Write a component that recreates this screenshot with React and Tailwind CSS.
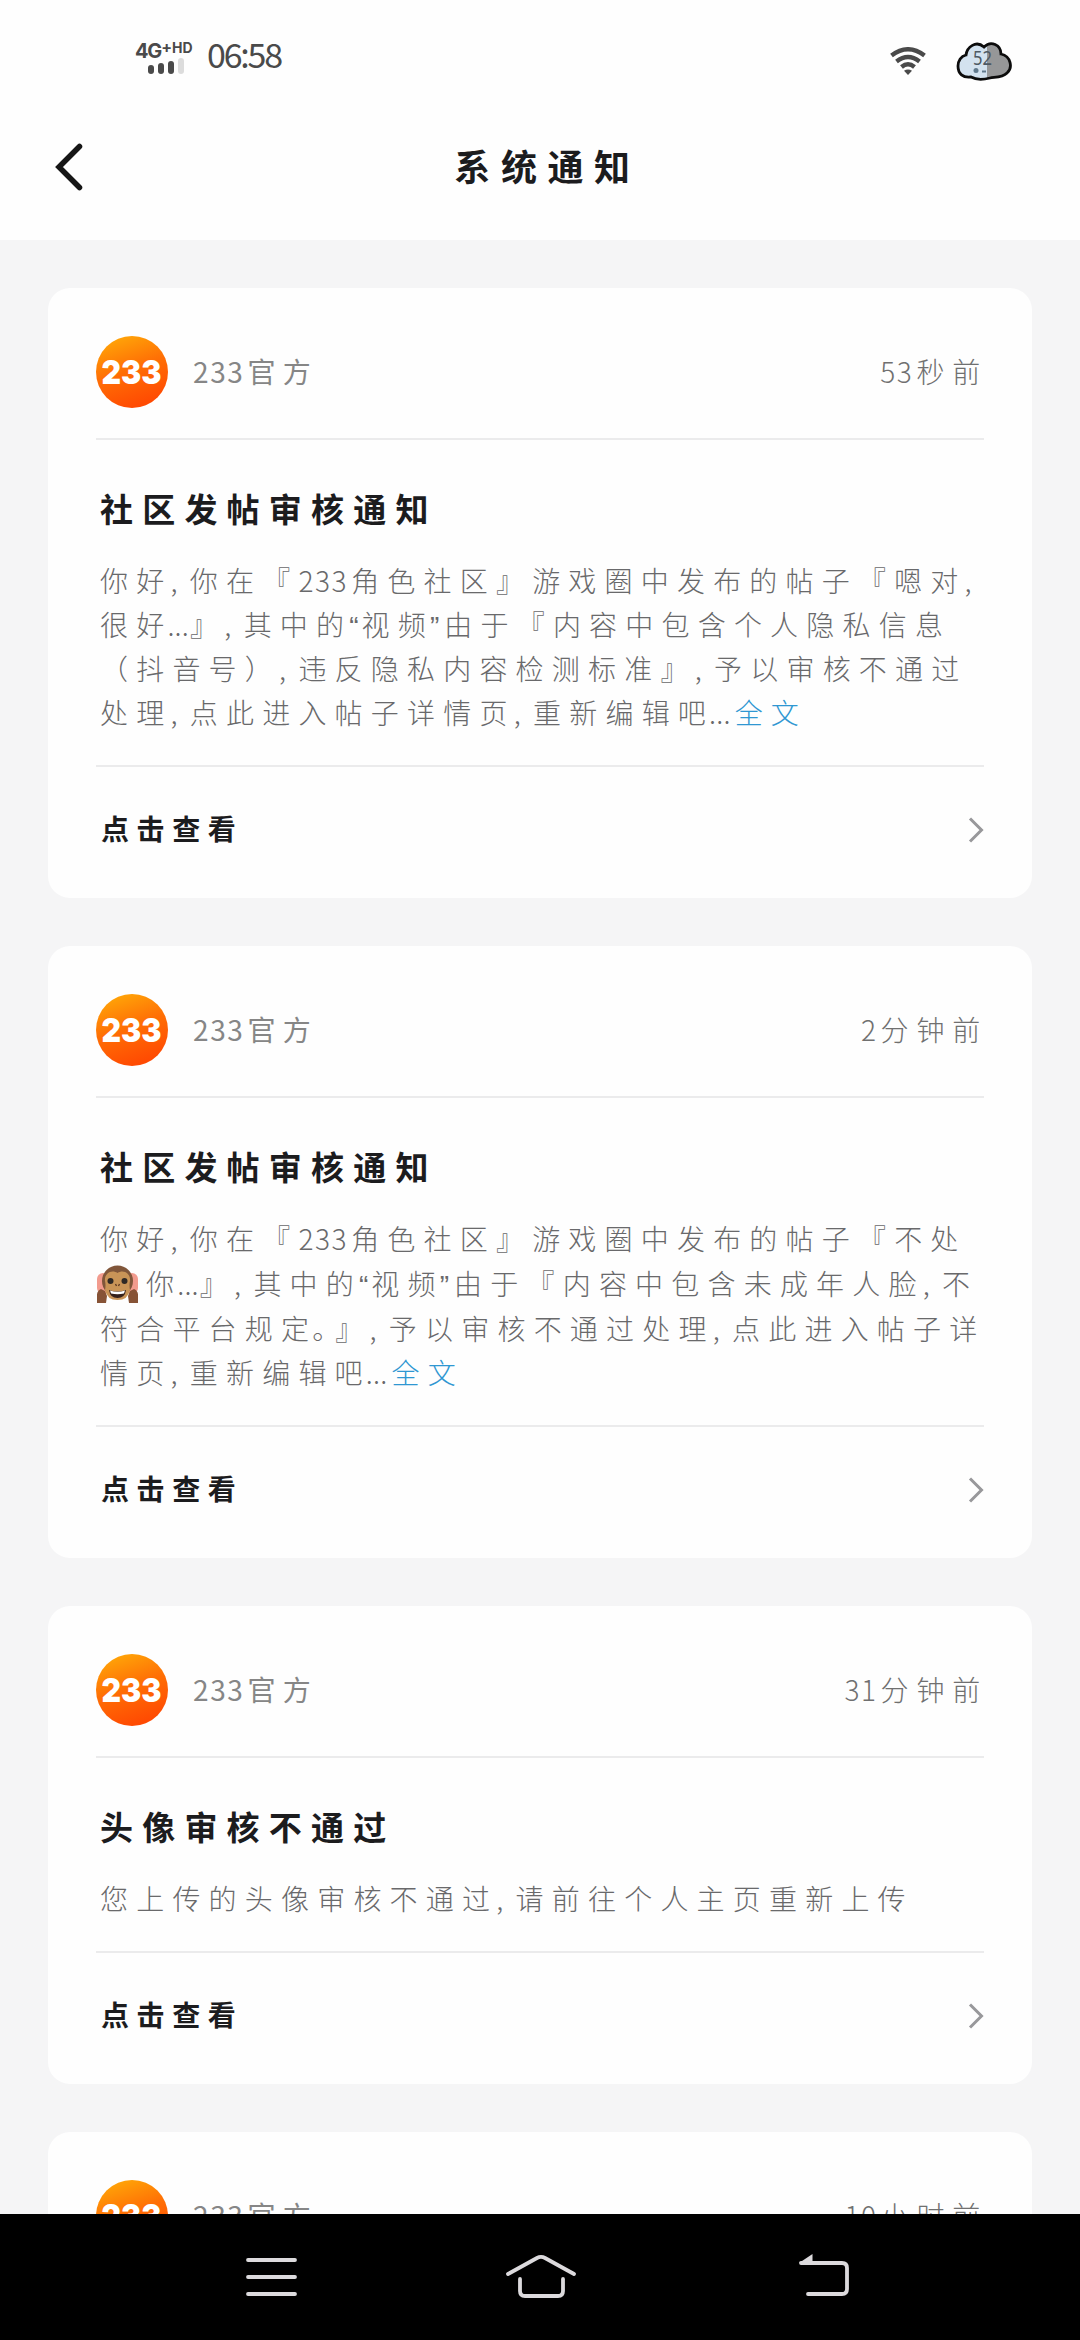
const notices = [
  {
    time: "53秒前",
    title: "社区发帖审核通知",
    lines: [
      "你好,你在『233角色社区』游戏圈中发布的帖子『嗯对,",
      "很好...』,其中的“视频”由于『内容中包含个人隐私信息",
      "（抖音号）,违反隐私内容检测标准』,予以审核不通过",
      "处理,点此进入帖子详情页,重新编辑吧...",
    ],
    more: true,
  },
  {
    time: "2分钟前",
    title: "社区发帖审核通知",
    lines: [
      "你好,你在『233角色社区』游戏圈中发布的帖子『不处",
      "@你...』,其中的“视频”由于『内容中包含未成年人脸,不",
      "符合平台规定。』,予以审核不通过处理,点此进入帖子详",
      "情页,重新编辑吧...",
    ],
    more: true,
  },
  {
    time: "31分钟前",
    title: "头像审核不通过",
    lines: ["您上传的头像审核不通过,请前往个人主页重新上传"],
  },
  {
    time: "10小时前",
    title: "头像审核不通过",
    lines: ["您上传的头像审核不通过,请前往个人主页重新上传"],
  },
]

function Monkey() {
  return (
    <svg viewBox="0 0 41 38" className="inline-block w-[41px] h-[38px] -ml-[3px] mr-[8px] -mt-[7px] align-middle">
      <rect x="0" y="8" width="12" height="21" rx="6" fill="#f29b8e" />
      <rect x="29" y="8" width="12" height="21" rx="6" fill="#f29b8e" />
      <path d="M0 38V29Q1 25 4 24L8 26L10 31L9 38Z" fill="#875336" />
      <path d="M41 38V29Q40 25 37 24L33 26L31 31L32 38Z" fill="#875336" />
      <circle cx="20.5" cy="16" r="15.5" fill="#80563a" />
      <path d="M20.5 8C15 4 7 8 8 16Q9 20 8 25Q10 35 20.5 35Q31 35 33 25Q32 20 33 16C34 8 26 4 20.5 8Z" fill="#c99457" />
      <circle cx="13.5" cy="16" r="3" fill="#2e2825" />
      <circle cx="27.5" cy="16" r="3" fill="#2e2825" />
      <path d="M18.5 19L19.5 21M22.5 19L21.5 21" stroke="#5c3822" strokeWidth="1.3" />
      <path d="M12 25Q20.5 28 29 25Q28 33 20.5 33Q13 33 12 25Z" fill="#35201a" />
      <path d="M13 25.5Q20.5 28 28 25.5L27 28.5Q20.5 30 14 28.5Z" fill="#fff" />
    </svg>
  )
}

// digits and half-width marks sit tighter than the characters around them
function Run({ text }) {
  const parts = text.split(/(\d+|\.\.\.|,|。|“|”|@)/).filter(Boolean)

  return parts.map((part, i) => {
    if (part === "@") return <Monkey key={i} />
    if (/^\d/.test(part)) return <span key={i} className="mr-[3px] tracking-[1.6px]">{part}</span>
    if (part === "...") return <span key={i} className="-ml-[5px] mr-[1px] tracking-[0.2px]">{part}</span>
    if (part === ",") return <span key={i} className="-ml-[2px] tracking-[12.4px]">{part}</span>
    if (part === "。") return <span key={i} className="-ml-[5px] tracking-[-5px]">{part}</span>
    if (part === "“") {
      return <span key={i} className="-ml-[3px] mr-[3px] font-['Liberation_Sans'] tracking-[0px]">{part}</span>
    }
    if (part === "”") {
      return <span key={i} className="-ml-[4px] mr-[5px] font-['Liberation_Sans'] tracking-[0px]">{part}</span>
    }
    return <span key={i}>{part}</span>
  })
}

function Logo() {
  return (
    <svg viewBox="0 0 72 72" className="w-[72px] h-[72px] shrink-0">
      <defs>
        <linearGradient id="logo" x1="0.15" y1="0" x2="0.5" y2="1">
          <stop offset="0" stopColor="#ffab08" />
          <stop offset="0.5" stopColor="#ff6f05" />
          <stop offset="1" stopColor="#ff4a02" />
        </linearGradient>
      </defs>
      <circle cx="36" cy="36" r="36" fill="url(#logo)" />
      <text x="5.5" y="48" textLength="60" lengthAdjust="spacingAndGlyphs" fill="#fff" className="font-['Inter'] font-black text-[33px]">
        233
      </text>
    </svg>
  )
}

function StatusBar() {
  return (
    <div className="h-[96px] pt-[38px] pl-[135px] pr-[68px] flex items-start text-[#4a4a4a]">
      <div className="w-[61px]">
        <div className="flex items-start font-['Inter'] font-bold leading-none">
          <span className="text-[20px] leading-[26px] tracking-[-1.2px]">4G</span>
          <span className="text-[16px] leading-[18px]">+</span>
          <span className="text-[14px] leading-[19px] tracking-[0px]">HD</span>
        </div>
        <div className="flex items-end gap-[4px] pl-[13px] h-[10px]">
          <span className="w-[6px] h-[9px] shrink-0 rounded-sm bg-[#4a4a4a]" />
          <span className="w-[6px] h-[11px] shrink-0 rounded-sm bg-[#4a4a4a]" />
          <span className="w-[6px] h-[13px] shrink-0 rounded-sm bg-[#4a4a4a]" />
          <span className="w-[6px] h-[16px] shrink-0 rounded-sm bg-[#dcdcdc]" />
        </div>
      </div>
      <span className="ml-[11px] mt-[-2px] font-['Noto_Sans_CJK_SC',sans-serif] text-[34px] leading-[36px] tracking-[-2.2px]">
        06:58
      </span>
      <svg viewBox="0 0 36 28" className="ml-auto mt-[9px] w-[36px] h-[28px]" fill="none" stroke="#4a4a4a" strokeWidth="4.4">
        <path d="M1.5 8.5Q18 -4 34.5 8.5" />
        <path d="M6.5 14.5Q18 5.5 29.5 14.5" />
        <path d="M11.5 20Q18 14.5 24.5 20" />
        <path d="M14 23.8Q18 21 22 23.8L18 28Z" fill="#4a4a4a" stroke="none" />
      </svg>
      <svg viewBox="0 0 56 40" className="ml-[30px] mt-[3px] w-[56px] h-[40px]">
        <defs>
          <linearGradient id="charge">
            <stop offset="0.55" stopColor="#d3e2ef" />
            <stop offset="0.55" stopColor="#969798" />
          </linearGradient>
        </defs>
        <path
          d="M10 14C11 6 20 -1 28 6C35 -1 45 4 45 13C55 15 57 27 51 32C46 37 38 36 34 37Q22 40 15 36C7 37 2 33 2 25C2 20 5 15 10 14Z"
          fill="url(#charge)" stroke="#0c0c0c" strokeWidth="2.8"
        />
        <text x="17" y="23.5" textLength="19" lengthAdjust="spacingAndGlyphs" fill="#4d5964" className="font-['Noto_Sans'] text-[20px]">52</text>
        <circle cx="20" cy="29.5" r="2.5" fill="#60798c" />
        <path d="M26 30.5H30" stroke="#60798c" strokeWidth="2" />
      </svg>
    </div>
  )
}

function Card({ notice }) {
  return (
    <section className="shrink-0 bg-[#fefefe] rounded-[22px] px-12">
      <div className="pt-12 pb-[30px] flex items-center text-[28px] leading-[72px] text-[#868686] border-b-2 border-[#ebebec]">
        <Logo />
        <span className="ml-[25px] -mt-[3px] tracking-[7.4px]">
          <Run text="233官方" />
        </span>
        <span className="ml-auto -mr-1 -mt-[3px] font-light text-[#707070] tracking-[7.8px]">
          <Run text={notice.time} />
        </span>
      </div>
      <h2 className="mt-[44px] mb-[28px] pl-[4px] text-[33px] leading-[48px] font-bold tracking-[9.2px] text-[#1c1c1e]">
        {notice.title}
      </h2>
      <div className="pl-[4px] pb-[29px] text-[28px] leading-[41px] font-light tracking-[8.2px] text-[#69696b] whitespace-nowrap border-b-2 border-[#ebebec]">
        {notice.lines.map((line, i) => (
          <p key={i} className={line[0] === "@" ? "h-[46px] leading-[42px]" : "h-[44px]"}>
            <Run text={line} />
            {notice.more && i === notice.lines.length - 1 && (
              <span className="ml-[3px] text-[#2f97d2]">全文</span>
            )}
          </p>
        ))}
      </div>
      <div className="h-[131px] pb-[9px] pl-[5px] flex items-center justify-between text-[28px] font-bold tracking-[7.6px] text-[#1c1c1e]">
        点击查看
        <svg viewBox="0 0 16 26" className="w-[16px] h-[26px] mt-1" fill="none" stroke="#98989b" strokeWidth="3">
          <path d="M2 1.5L13.5 13L2 24.5" />
        </svg>
      </div>
    </section>
  )
}

function NavBar() {
  return (
    <nav className="h-[126px] shrink-0 bg-black pl-[246px] pt-[40px] flex items-start">
      <svg viewBox="0 0 51 44" className="w-[51px] h-[44px]" fill="none" stroke="#dcdadd" strokeWidth="3.8" strokeLinecap="round">
        <path d="M2 6H49M2 23H49M2 40H49" />
      </svg>
      <svg viewBox="0 0 72 44" className="ml-[208px] w-[72px] h-[44px]" fill="none" stroke="#dcdadd" strokeWidth="3.8" strokeLinecap="round">
        <path d="M3 20L32 4Q36 1.8 40 4L69 20" />
        <path d="M15 25V37Q15 42 20 42H53Q58 42 58 37V25" />
      </svg>
      <svg viewBox="0 0 52 44" className="ml-[221px] w-[52px] h-[44px]" fill="none" stroke="#dcdadd" strokeWidth="3.8" strokeLinecap="round">
        <path d="M3 9H44Q49 9 49 14V35Q49 40 44 40H10" />
        <path d="M1 9L14.5 0V9Z" fill="#dcdadd" stroke="none" />
      </svg>
    </nav>
  )
}

function App() {
  return (
    <div className="w-[1080px] h-[2340px] overflow-hidden flex flex-col bg-[#f5f5f6] font-['Noto_Sans_CJK_SC',sans-serif] [text-spacing-trim:space-all]">
      <header className="h-[240px] shrink-0 bg-[#fefefe]">
        <StatusBar />
        <div className="h-[144px] relative flex items-start justify-center pt-[41px]">
          <svg viewBox="0 0 28 48" className="absolute left-[55px] top-[47px] w-[28px] h-[48px]" fill="none" stroke="#161616" strokeWidth="5.5" strokeLinecap="round">
            <path d="M24.5 3.5L4 24L24.5 44.5" />
          </svg>
          <h1 className="pl-[15px] text-[36px] leading-[56px] font-bold tracking-[10.6px] text-[#1c1c1e]">系统通知</h1>
        </div>
      </header>
      <main className="flex-1 min-h-0 overflow-hidden px-12 pt-12 flex flex-col gap-12">
        {notices.map((notice) => (
          <Card key={notice.time} notice={notice} />
        ))}
      </main>
      <NavBar />
    </div>
  )
}

export default App
